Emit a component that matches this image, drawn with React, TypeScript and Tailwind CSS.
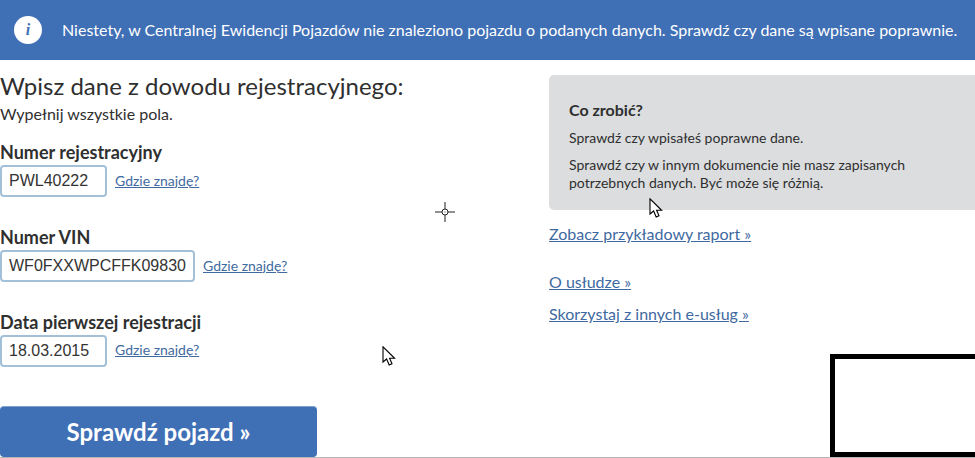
import React from "react";

const Cursor = ({ className }: { className: string }) => (
  <svg className={className} width="14" height="20" viewBox="0 0 14 20">
    <path d="M1 0.8V16L4.6 13L7.2 19L10 17.8L7.6 12.3H12.6L1 0.8Z" fill="#fff" stroke="#000" strokeWidth="1.1" />
  </svg>
);

const Hint = () => (
  <a className="text-[14px] leading-[18px] text-[#3f6a9f] underline">Gdzie znajdę?</a>
);

const Field = ({ label, value, w, mb, hintTop }: { label: string; value: string; w: string; mb: string; hintTop: string }) => (
  <div className={mb}>
    <div className="text-[18px] leading-[22px] font-bold text-[#2f2f2f]">{label}</div>
    <div className="flex items-center mt-[2px]">
      <div className={`${w} h-[32px] border-2 border-[#a3c0d9] rounded-[4px] flex items-center pl-[7px] text-[16px] text-[#333] font-['Liberation_Sans',sans-serif]`}>
        {value}
      </div>
      <div className={`ml-[8px] ${hintTop}`}><Hint /></div>
    </div>
  </div>
);

export default function App() {
  return (
    <div className="relative w-[975px] h-[458px] overflow-hidden bg-white font-['Lato',sans-serif] text-[#2f2f2f]">
      <div className="h-[60px] bg-[#3f6fb5] flex items-center pl-[14px] text-white">
        <div className="w-[28px] h-[28px] rounded-full bg-white flex items-center justify-center text-[#3f6fb5] font-['Liberation_Serif',serif] italic font-bold text-[16px]">i</div>
        <div className="ml-[20px] text-[16px] whitespace-nowrap">Niestety, w Centralnej Ewidencji Pojazdów nie znaleziono pojazdu o podanych danych. Sprawdź czy dane są wpisane poprawnie.</div>
      </div>
      <div className="flex">
        <div className="w-[549px]">
          <h1 className="mt-[12px] text-[24px] leading-[28px]">Wpisz dane z dowodu rejestracyjnego:</h1>
          <p className="mt-[4px] text-[16px] leading-[20px]">Wypełnij wszystkie pola.</p>
          <div className="mt-[17px]">
            <Field label="Numer rejestracyjny" value="PWL40222" w="w-[107px]" mb="mb-[29px]" hintTop="-mt-[3px]" />
            <Field label="Numer VIN" value="WF0FXXWPCFFK09830" w="w-[195px]" mb="mb-[29px]" hintTop="-mt-[3px]" />
            <Field label="Data pierwszej rejestracji" value="18.03.2015" w="w-[107px]" mb="mb-[39px]" hintTop="-mt-[5px]" />
          </div>
          <button className="w-[317px] h-[51px] bg-[#3f6fb5] rounded-[4px] text-white text-[24px] font-bold border-t border-[#7f9fcc]">Sprawdź pojazd »</button>
        </div>
        <div className="w-[426px] pt-[15px]">
          <div className="h-[135px] bg-[#dbdddf] rounded-l-[5px] pl-[20px] pt-[26px] text-[14px] leading-[18px]">
            <div className="text-[16px] font-bold">Co zrobić?</div>
            <p className="mt-[10px]">Sprawdź czy wpisałeś poprawne dane.</p>
            <p className="mt-[9px]">Sprawdź czy w innym dokumencie nie masz zapisanych<br />potrzebnych danych. Być może się różnią.</p>
          </div>
          <div className="flex flex-col items-start text-[16px] leading-[20px] text-[#3f6a9f]">
            <a className="mt-[14px] underline">Zobacz przykładowy raport »</a>
            <a className="mt-[28px] underline">O usłudze »</a>
            <a className="mt-[12px] underline">Skorzystaj z innych e-usług »</a>
          </div>
        </div>
      </div>
      <div className="absolute left-0 right-0 bottom-0 h-px bg-[#b5b5b5]" />
      <div className="absolute left-[830px] top-[354px] w-[145px] h-[103px] bg-white border-[5px] border-black border-r-0" />
      <Cursor className="absolute left-[649px] top-[198px]" />
      <Cursor className="absolute left-[382px] top-[346px]" />
      <svg className="absolute left-[434px] top-[201px]" width="22" height="22" viewBox="0 0 22 22" fill="none" stroke="#222" strokeWidth="1">
        <circle cx="11" cy="11" r="3" />
        <path d="M11 1V8M11 14V21M1 11H8M14 11H21" />
        <path d="M10.5 11H11.5" />
      </svg>
    </div>
  );
}
